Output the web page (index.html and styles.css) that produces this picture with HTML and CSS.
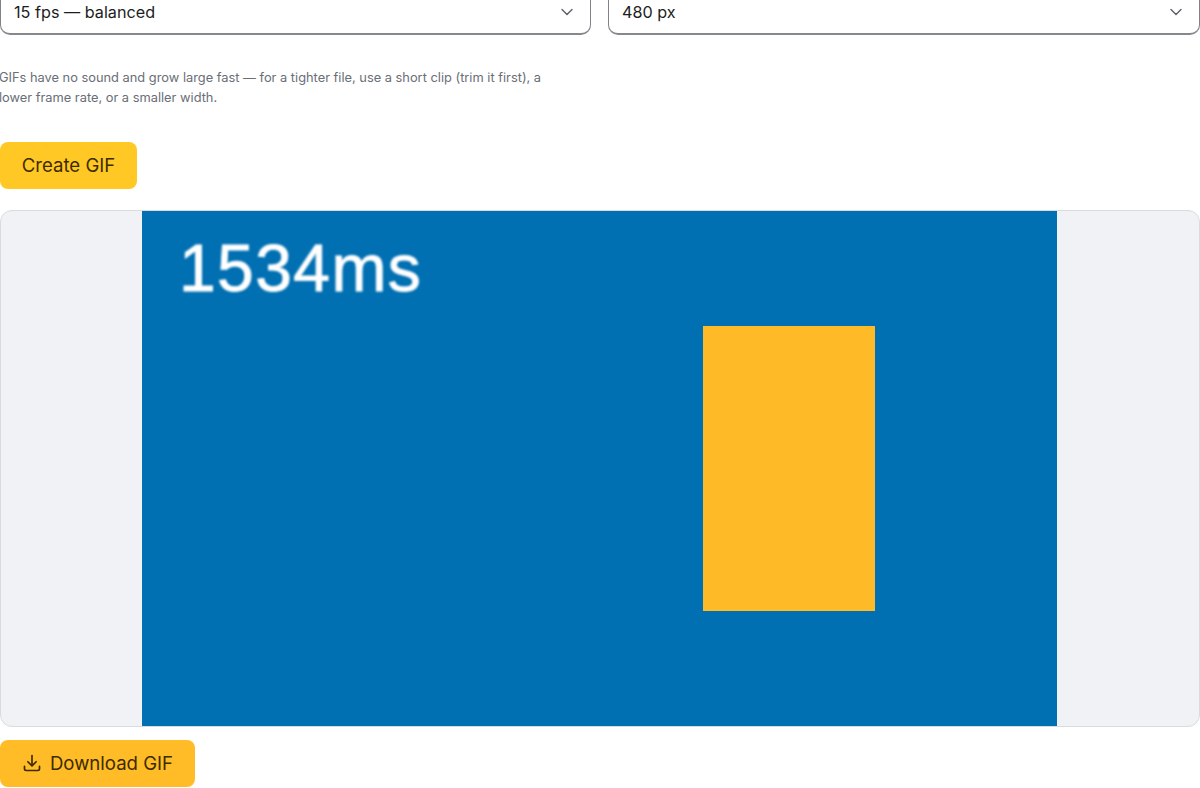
FILE: index.html
```html
<!DOCTYPE html>
<html lang="en">
<head>
<meta charset="utf-8">
<title>Create GIF</title>
<link rel="stylesheet" href="styles.css">
</head>
<body>
<main class="page">
  <div class="fields">
    <div class="select"><span>15 fps — balanced</span>
      <svg class="chev" viewBox="0 0 14 14" width="14" height="14"><path d="M2 4.500l5 5 5-5" fill="none" stroke="#5a5f67" stroke-width="1.4" stroke-linecap="round" stroke-linejoin="round"/></svg>
    </div>
    <div class="select"><span>480 px</span>
      <svg class="chev" viewBox="0 0 14 14" width="14" height="14"><path d="M2 4.500l5 5 5-5" fill="none" stroke="#5a5f67" stroke-width="1.4" stroke-linecap="round" stroke-linejoin="round"/></svg>
    </div>
  </div>
  <p class="hint">GIFs have no sound and grow large fast — for a tighter file, use a short clip (trim it first), a lower frame rate, or a smaller width.</p>
  <button class="btn btn-create">Create GIF</button>
  <div class="preview">
    <div class="frame">
      <div class="time">1534ms</div>
      <div class="box"></div>
    </div>
  </div>
  <button class="btn btn-download">
    <svg viewBox="0 0 24 24" width="20" height="20" fill="none" stroke="#3d2b00" stroke-width="2" stroke-linecap="round" stroke-linejoin="round"><path d="M12 3v12"/><path d="M7 10.500l5 5 5-5"/><path d="M3 16v3a2 2 0 0 0 2 2h14a2 2 0 0 0 2-2v-3"/></svg>
    Download GIF
  </button>
</main>
</body>
</html>
```
FILE: styles.css
```css
html, body {
  margin: 0;
  padding: 0;
  height: 788px;
  overflow: hidden;
  background: #fff;
}
body {
  font-family: Inter, "Liberation Sans", sans-serif;
  color: #1c1e21;
}
.page {
  margin-top: -11px;
  display: flex;
  flex-direction: column;
  align-items: flex-start;
}
.fields {
  width: 100%;
  display: grid;
  grid-template-columns: 591px 592px;
  gap: 17px;
}
.select {
  box-sizing: border-box;
  height: 46px;
  padding: 0 13px;
  display: flex;
  align-items: center;
  justify-content: space-between;
  border: 1px solid #7f8388;
  border-bottom: 2px solid #85888d;
  border-radius: 10px;
  font-size: 16.2px;
  background: #fff;
}
.chev {
  flex: none;
  margin-right: 3px;
}
.hint {
  margin: 33px 0 0 -1px;
  width: 555px;
  font-size: 12.83px;
  line-height: 20px;
  color: #6a6e76;
}
.btn {
  display: inline-flex;
  align-items: center;
  gap: 8px;
  height: 47px;
  padding: 0 0 2px;
  border: 0;
  border-radius: 8px;
  font-family: inherit;
  font-size: 18.6px;
  color: #3d2b00;
}
.btn-create {
  margin-top: 34px;
  width: 137px;
  justify-content: center;
  background: #ffc824;
}
.preview {
  box-sizing: border-box;
  margin-top: 21px;
  width: 100%;
  height: 517px;
  display: flex;
  justify-content: center;
  background: #f1f2f6;
  border: 1px solid #d8dbe0;
  border-radius: 12px;
  overflow: hidden;
}
.frame {
  position: relative;
  flex: none;
  width: 915px;
  height: 515px;
  margin-right: 1px;
  background: #0070b3;
}
.time {
  position: absolute;
  left: 37px;
  top: 20px;
  font-family: "Liberation Sans", Arial, sans-serif;
  font-size: 66px;
  line-height: 75px;
  letter-spacing: 1.4px;
  color: #fff;
  -webkit-text-stroke: 0.9px #fff;
  filter: blur(1px);
}
.box {
  position: absolute;
  left: 561px;
  top: 115px;
  width: 172px;
  height: 285px;
  background: #ffba27;
  filter: blur(0.6px);
}
.btn-download {
  margin-top: 13px;
  width: 195px;
  justify-content: center;
  background: #ffbc26;
}
```
